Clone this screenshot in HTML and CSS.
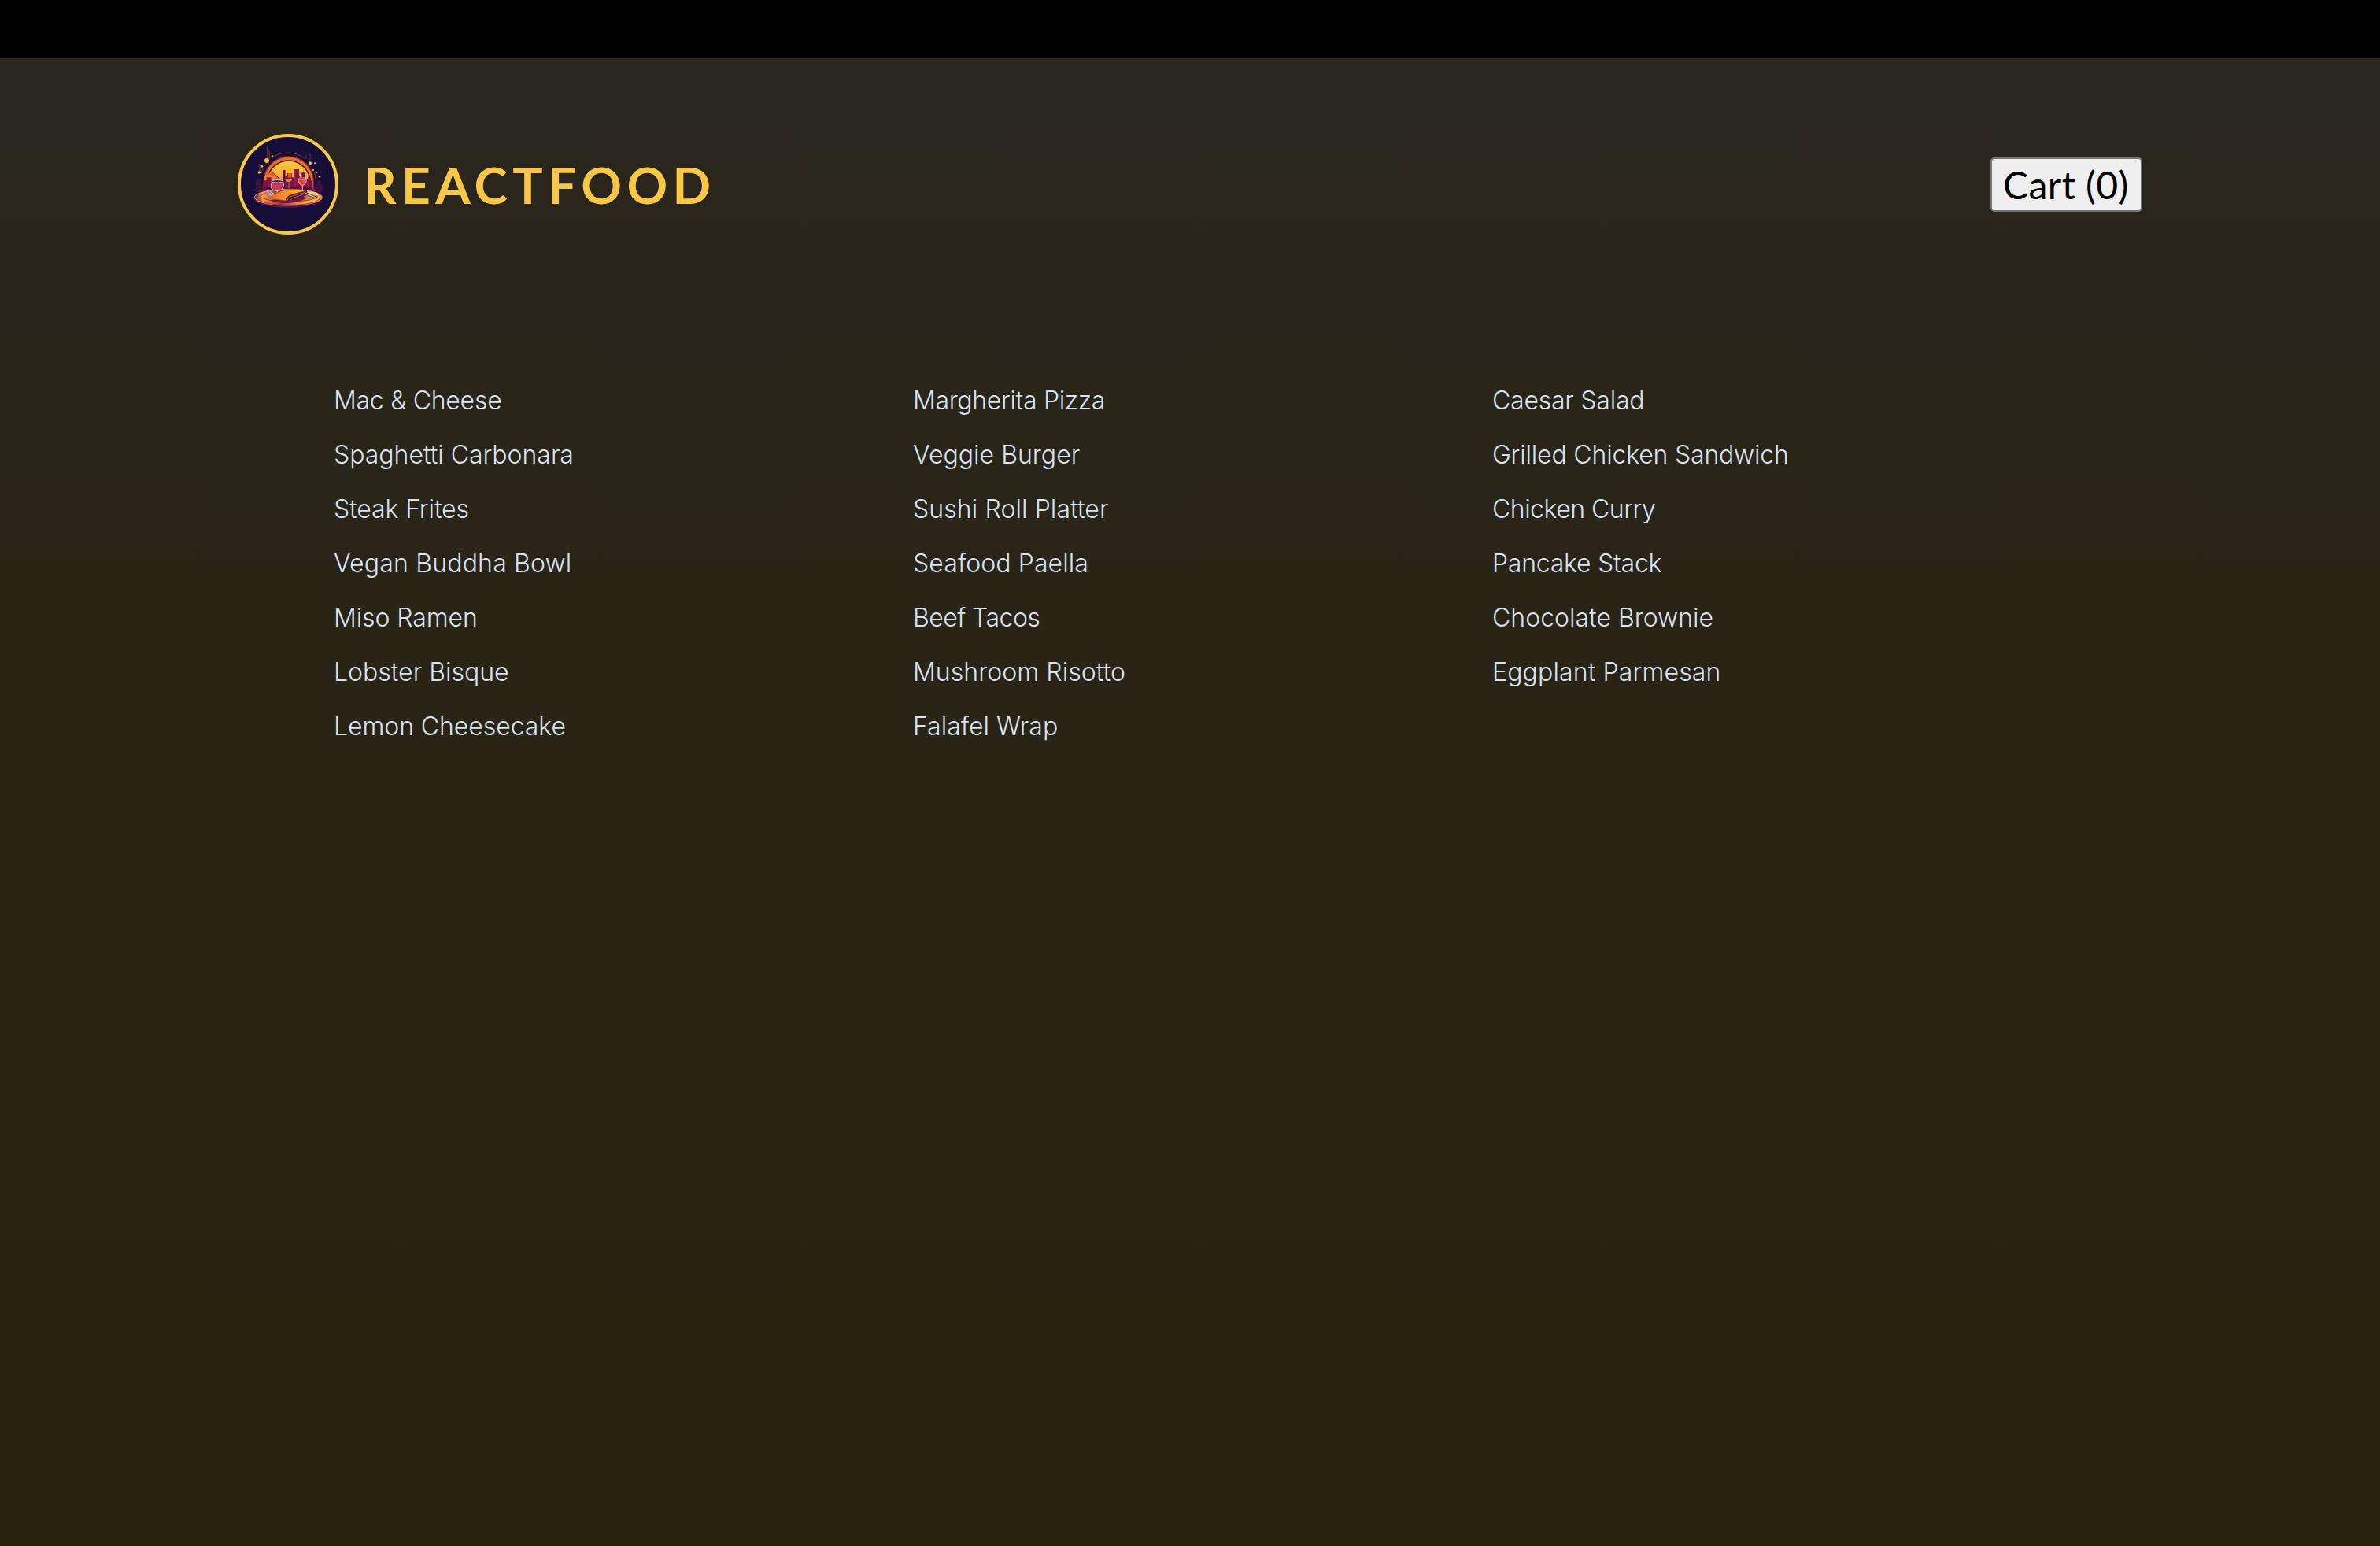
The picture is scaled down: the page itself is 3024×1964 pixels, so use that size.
FILE: index.html
```html
<!DOCTYPE html>
<html lang="en">
<head>
<meta charset="utf-8">
<title>ReactFood</title>
<link rel="stylesheet" href="styles.css">
</head>
<body>
<div class="top-strip"></div>
<header class="main-header">
  <div class="title">
    <svg class="logo" viewBox="36 30 384 384" role="img" aria-label="A restaurant table">
      <defs>
        <linearGradient id="sun" x1="0" y1="0" x2="0" y2="1"><stop offset="0" stop-color="#f9ca3a"/><stop offset=".55" stop-color="#f6a832"/><stop offset="1" stop-color="#e8662c"/></linearGradient>
        <linearGradient id="plate" x1="0" y1="0" x2="1" y2="0"><stop offset="0" stop-color="#6d1d50"/><stop offset=".12" stop-color="#f0913a"/><stop offset=".4" stop-color="#a52c45"/><stop offset=".65" stop-color="#ef8a2e"/><stop offset=".9" stop-color="#f7c04a"/><stop offset="1" stop-color="#e47a3a"/></linearGradient>
        <linearGradient id="plate-inner" x1="0" y1="0" x2="1" y2="0"><stop offset="0" stop-color="#f2b13c"/><stop offset=".25" stop-color="#c04a38"/><stop offset=".6" stop-color="#a83a40"/><stop offset="1" stop-color="#f6bd45"/></linearGradient>
        <linearGradient id="napkin" x1="0" y1="0" x2="1" y2="0"><stop offset="0" stop-color="#ee6c2a"/><stop offset=".5" stop-color="#f79a2e"/><stop offset="1" stop-color="#fac23a"/></linearGradient>
        <linearGradient id="wine" x1="0" y1="0" x2="0" y2="1"><stop offset="0" stop-color="#6e1c58"/><stop offset=".4" stop-color="#c53a4e"/><stop offset="1" stop-color="#8c1f55"/></linearGradient>
        <linearGradient id="fade" x1="0" y1="0" x2="0" y2="1"><stop offset="0" stop-color="#6a1550"/><stop offset="1" stop-color="#250c40"/></linearGradient>
        <clipPath id="dome"><path d="M137 256V212a93 93 0 0 1 186 0v44z"/></clipPath>
      </defs>
      <circle cx="228" cy="222" r="186" fill="#160e38" stroke="#f9c84a" stroke-width="12"/>
      <path d="M104 252v-42l6-10h14v18h8v34zM328 252v-32h10v-14h14v20h10v26z" fill="#32103f"/>
      <path d="M106 212h16M106 222h16M338 214h14M338 224h18M106 234h24M332 236h30" stroke="#551545" stroke-width="3"/>
      <path d="M126 180a106 106 0 0 1 22-42M166 122a106 106 0 0 1 126 2M318 156a106 106 0 0 1 16 52" fill="none" stroke="#7d3b2b" stroke-width="3"/>
      <path d="M133 250v-38a97 97 0 0 1 194 0v38z" fill="#8c2a2c"/>
      <path d="M137 250v-38a93 93 0 0 1 186 0v38z" fill="#e86f2b"/>
      <path d="M146 250v-36a84 84 0 0 1 168 0v36z" fill="#3b123a"/>
      <path d="M150 250v-36a80 80 0 0 1 160 0v36z" fill="url(#sun)"/>
      <g clip-path="url(#dome)">
        <circle cx="158" cy="216" r="38" fill="#e95f30"/>
        <path d="M138 190q30-10 48 12l8 20-56 10z" fill="#f07b33"/>
        <path d="M164 173l40 35M294 172l-34 32" stroke="#5c1b3f" stroke-width="3"/>
        <path d="M138 252v-44h8v-12h18v16h12v-12h16v10h16v-42h9v24h8v-12h18v16h7v-31h20v31h10v-18h14v24h10v-8h10v14h9v44z" fill="#7c1248"/>
        <path d="M227 180h15v16h-15z" fill="#ef5130"/>
        <path d="M208 168h9v50h-9z" fill="#56123f"/>
        <path d="M251 166h8v70h-8zM150 210h7v30h-7zM300 212h7v30h-7z" fill="#9c1c49"/>
        <path d="M136 250v-16h190v22H136z" fill="#4f1047"/>
      </g>
      <path d="M106 255q-4-9 20-9h204q26 0 28 10z" fill="url(#fade)"/>
      <path d="M148 80v46M153 90v34M312 106v30M118 143v32M158 96v30M166 98v10M122 150v22M297 108v18" stroke="#7e4a2b" stroke-width="2"/>
      <g fill="#f8b838"><circle cx="147" cy="132" r="9"/><circle cx="168" cy="116" r="4"/><circle cx="312" cy="142" r="6"/><circle cx="118" cy="177" r="5"/><circle cx="129" cy="154" r="4"/><circle cx="330" cy="142" r="3"/><circle cx="338" cy="176" r="3"/><circle cx="348" cy="193" r="4"/><circle cx="324" cy="168" r="3"/></g>
      <ellipse cx="229" cy="278" rx="129" ry="33" fill="#561746"/>
      <ellipse cx="229" cy="272" rx="129" ry="31" fill="url(#plate)" stroke="#f8cc78" stroke-width="2"/>
      <path d="M110 274c10 18 58 28 118 28s110-8 124-28" fill="none" stroke="#9a3150" stroke-width="3"/>
      <ellipse cx="232" cy="268" rx="108" ry="20" fill="url(#plate-inner)" stroke="#7b2b3b" stroke-width="2"/>
      <path d="M160 284q70 24 138-8l-30-18z" fill="#6b174c"/>
      <path d="M170 210q-12 18-4 30 18 14 38 2 12-14 4-32-18-8-38 0z" fill="url(#wine)" stroke="#dcc6d4" stroke-width="3"/>
      <ellipse cx="187" cy="211" rx="22" ry="5" fill="#3b174a" stroke="#cfc2d8" stroke-width="3"/>
      <path d="M168 224q18-6 38 2v8q-12 18-34 6z" fill="#c93b50"/>
      <path d="M187 248v10" stroke="#d8b8ca" stroke-width="4"/>
      <path d="M213 202h34q-4 12-16 14-14-2-18-14zM231 216v24M222 241h18" fill="#ee7d32" stroke="#40203c" stroke-width="3"/>
      <path d="M214 202h31M231 219v18" stroke="#d8bec8" stroke-width="2"/>
      <path d="M268 201q-3 22 15 26 17-4 14-26z" fill="#e24b3b" stroke="#eba8a8" stroke-width="3"/>
      <ellipse cx="283" cy="201" rx="14" ry="4" fill="#8e2650" stroke="#e6b6bd" stroke-width="2"/>
      <path d="M283 227v20M274 248h18" stroke="#f3b8a0" stroke-width="3"/>
      <path d="M214 278q4-14 28-17l56-17q6 6 1 20l-56 20q-26 6-29-6z" fill="#49172f"/>
      <path d="M226 284q2-14 18-17l52-15M236 286q2-10 14-13l46-15" fill="none" stroke="#b8602c" stroke-width="3"/>
      <path d="M164 262l62-22q38 0 72 6l-56 15q-18 4-23 24-26-4-54-5 8-10-1-18z" fill="url(#napkin)" stroke="#8f3027" stroke-width="2"/>
      <path d="M148 249l20 14M146 257l18 8M154 244l17 14" stroke="#b4acd0" stroke-width="4" stroke-linecap="round"/>
      <path d="M294 253l44 18q-10 5-20-1l-26-10z" fill="#efe0e4" stroke="#5d2c51" stroke-width="3"/>
      <path d="M302 252l40 11" stroke="#fff1d0" stroke-width="4"/>
    </svg>
    <h1>ReactFood</h1>
  </div>
  <nav><button class="cart-button">Cart (0)</button></nav>
</header>
<main>
  <ul class="meals">
    <li>Mac &amp; Cheese</li>
    <li>Margherita Pizza</li>
    <li>Caesar Salad</li>
    <li>Spaghetti Carbonara</li>
    <li>Veggie Burger</li>
    <li>Grilled Chicken Sandwich</li>
    <li>Steak Frites</li>
    <li>Sushi Roll Platter</li>
    <li>Chicken Curry</li>
    <li>Vegan Buddha Bowl</li>
    <li>Seafood Paella</li>
    <li>Pancake Stack</li>
    <li>Miso Ramen</li>
    <li>Beef Tacos</li>
    <li>Chocolate Brownie</li>
    <li>Lobster Bisque</li>
    <li>Mushroom Risotto</li>
    <li>Eggplant Parmesan</li>
    <li>Lemon Cheesecake</li>
    <li>Falafel Wrap</li>
  </ul>
</main>
</body>
</html>
```
FILE: styles.css
```css
* {
  box-sizing: border-box;
}

body {
  margin: 0;
  min-height: 1964px;
  background: linear-gradient(180deg, #29261e, #2a220b);
  color: #d9e2f1;
  font-family: Inter, sans-serif;
  font-size: 32px;
  font-weight: 300;
}

.top-strip {
  height: 74px;
  background: #000;
}

.main-header {
  display: flex;
  justify-content: space-between;
  align-items: center;
  padding: 96px 10%;
}

.title {
  display: flex;
  align-items: center;
  gap: 32px;
}

.logo {
  display: block;
  width: 128px;
  height: 128px;
}

h1 {
  margin: 0;
  color: #f9c744;
  font: 700 64px/77px Lato, sans-serif;
  letter-spacing: 6.4px;
  text-transform: uppercase;
}

nav {
  display: flex;
}

.cart-button {
  width: 192.5px;
  height: 69px;
  padding: 2px 1px 0 0;
  border: 2px solid #767676;
  border-radius: 5px;
  background: #efefef;
  color: #000;
  font: 400 48px/58px Lato, sans-serif;
  letter-spacing: 0.4px;
}

.meals {
  display: grid;
  grid-template-columns: repeat(3, 1fr);
  gap: 32px;
  width: 2240px;
  margin: 64px auto;
  padding: 32px;
  list-style: none;
}

.meals li {
  line-height: 37px;
  white-space: nowrap;
}

.meals li:nth-child(1) { letter-spacing: -0.26px; }
.meals li:nth-child(2) { letter-spacing: -0.34px; }
.meals li:nth-child(3) { letter-spacing: -0.24px; }
.meals li:nth-child(4) { letter-spacing: -0.02px; }
.meals li:nth-child(5) { letter-spacing: 0.02px; }
.meals li:nth-child(6) { letter-spacing: -0.184px; }
.meals li:nth-child(7) { letter-spacing: -0.109px; }
.meals li:nth-child(8) { letter-spacing: 0.091px; }
.meals li:nth-child(9) { letter-spacing: -0.5px; }
.meals li:nth-child(10) { letter-spacing: 0.18px; }
.meals li:nth-child(11) { letter-spacing: 0.08px; }
.meals li:nth-child(12) { letter-spacing: -0.24px; }
.meals li:nth-child(13) { letter-spacing: -0.101px; }
.meals li:nth-child(14) { letter-spacing: -0.56px; }
.meals li:nth-child(15) { letter-spacing: 0.01px; }
.meals li:nth-child(17) { letter-spacing: 0.054px; }
.meals li:nth-child(18) { letter-spacing: 0.134px; }
.meals li:nth-child(19) { letter-spacing: -0.08px; }
```
